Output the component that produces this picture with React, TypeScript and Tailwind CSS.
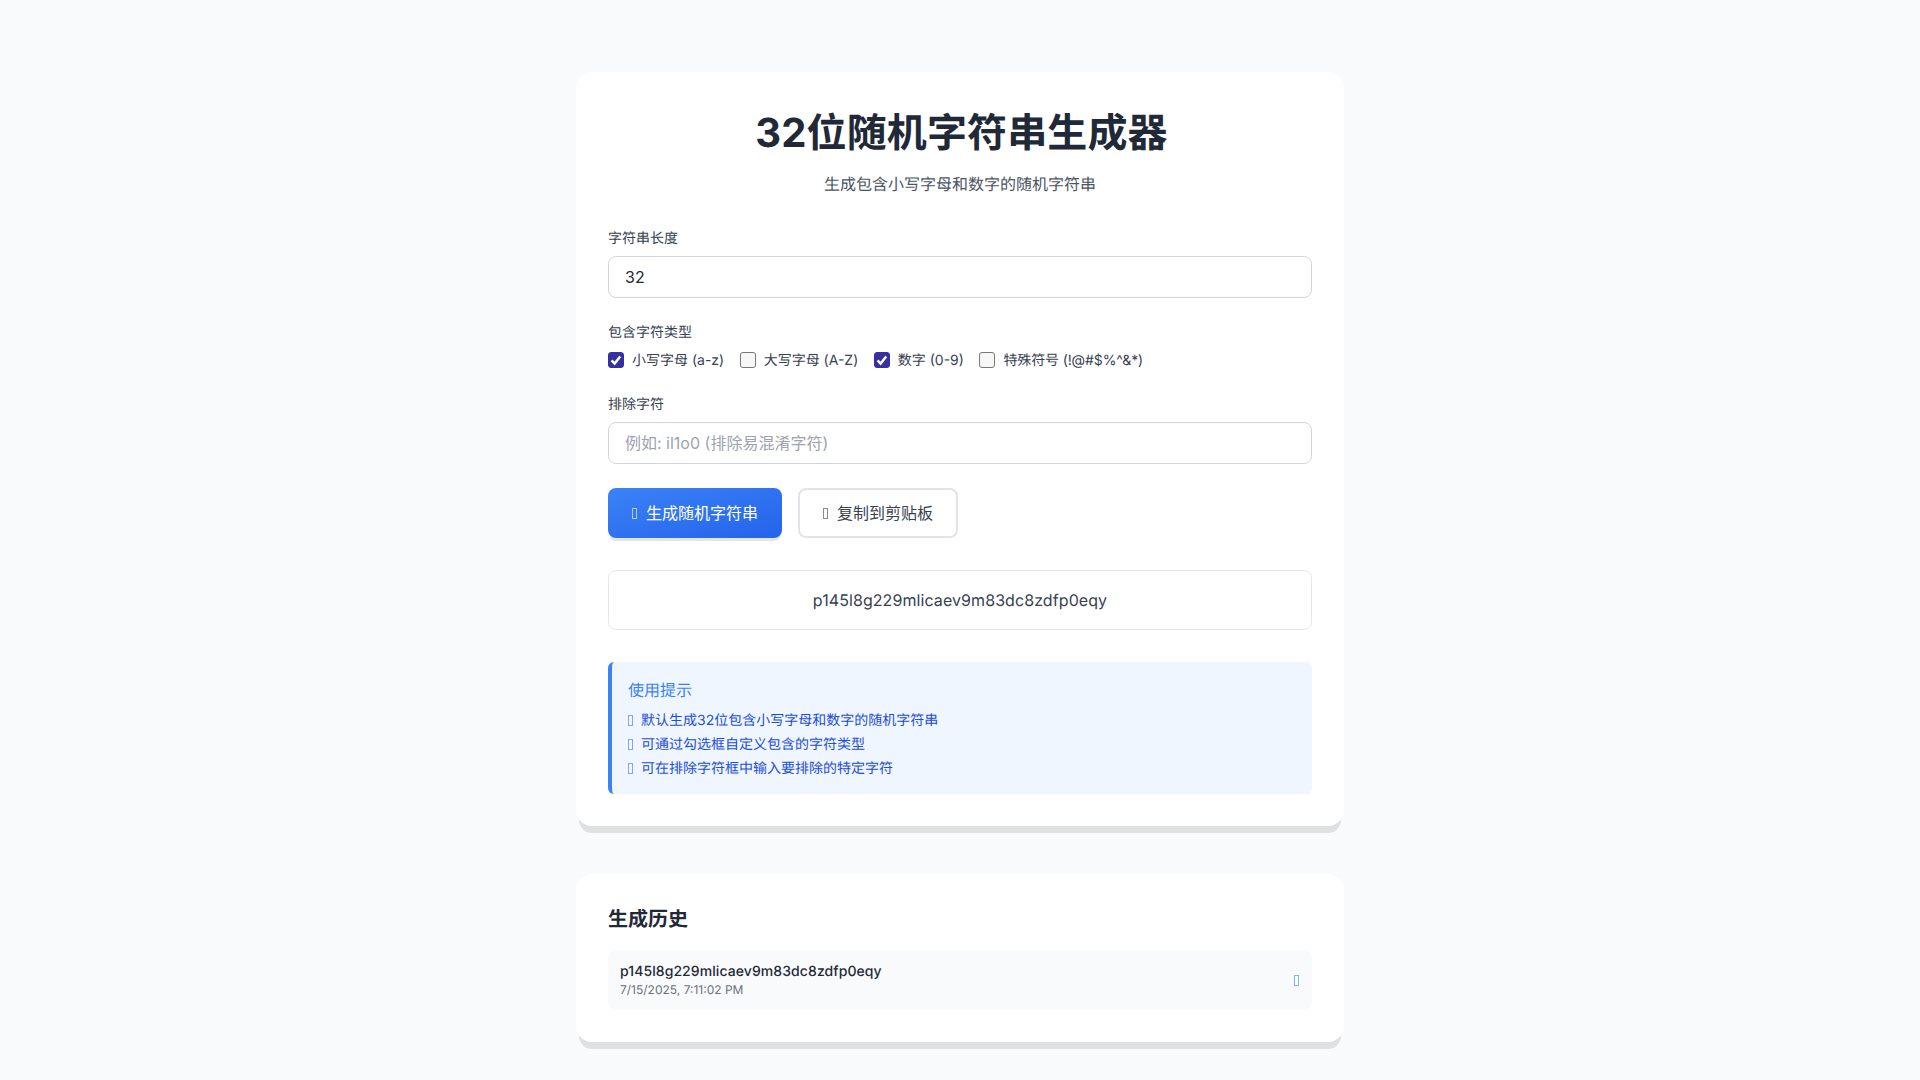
const FONT = "font-['Inter','Noto_Sans_CJK_SC',sans-serif]";

const CHAR_TYPES = [
  { label: "小写字母 (a-z)", checked: true, tracking: "" },
  { label: "大写字母 (A-Z)", checked: false, tracking: "" },
  { label: "数字 (0-9)", checked: true, tracking: "" },
  { label: "特殊符号 (!@#$%^&*)", checked: false, tracking: "tracking-[-0.12px]" },
];

const TIPS = [
  "默认生成32位包含小写字母和数字的随机字符串",
  "可通过勾选框自定义包含的字符类型",
  "可在排除字符框中输入要排除的特定字符",
];

const RESULT = "p145l8g229mlicaev9m83dc8zdfp0eqy";

// the icon font never loaded in the picture, so each icon is an empty box
function MissingGlyph({ className }: { className: string }) {
  return <span className={`inline-block h-[11px] w-[5px] shrink-0 border ${className}`} />;
}

function Check({ label, checked, tracking }: { label: string; checked: boolean; tracking: string }) {
  return (
    <label className="flex items-center gap-2 text-sm text-[#374151]">
      <span className="relative flex h-4 w-4">
        <input
          type="checkbox"
          defaultChecked={checked}
          className="peer m-0 h-4 w-4 appearance-none rounded-[3px] border border-[#767676] bg-[#f7f7f7] checked:border-[#3730a3] checked:bg-[#3730a3]"
        />
        <svg viewBox="0 0 16 16" className="pointer-events-none absolute inset-0 hidden h-4 w-4 peer-checked:block" fill="none" stroke="white" strokeWidth="2.4">
          <path d="M3.6 8.4 6.6 11.6 12.2 4.4" />
        </svg>
      </span>
      <span className={`pt-[2px] leading-[18px] ${tracking}`}>{label}</span>
    </label>
  );
}

export default function App() {
  return (
    <div className={`${FONT} min-h-screen bg-[#f9fafb] pt-[72px] pb-[38px] text-[#1f2937] [text-rendering:geometricPrecision]`}>
      <div className="mx-auto w-[768px]">
        <div className="mb-12 rounded-2xl bg-white p-8 shadow-[0_10px_0_-3px_rgba(0,0,0,0.1)]">
          <div className="mb-8 text-center">
            <h1 className="mb-[10px] pl-[3px] text-[40px] leading-[58px] font-bold tracking-[0.12px] text-[#1f2937]">32位随机字符串生成器</h1>
            <p className="text-base leading-6 text-[#4b5563]">生成包含小写字母和数字的随机字符串</p>
          </div>

          <div className="mb-6">
            <label className="mb-[6px] block text-sm leading-[22px] text-[#374151]">字符串长度</label>
            <input
              type="text"
              defaultValue="32"
              className="block h-[42px] w-full rounded-lg border border-[#d1d5db] bg-white px-4 text-base text-[#1f2937]"
            />
          </div>

          <div className="mb-6">
            <label className="mb-[6px] block text-sm leading-[22px] text-[#374151]">包含字符类型</label>
            <div className="flex gap-[15.5px]">
              {CHAR_TYPES.map((item) => (
                <Check key={item.label} label={item.label} checked={item.checked} tracking={item.tracking} />
              ))}
            </div>
          </div>

          <div className="mb-6">
            <label className="mb-[6px] block text-sm leading-[22px] text-[#374151]">排除字符</label>
            <input
              type="text"
              placeholder="例如: il1o0 (排除易混淆字符)"
              className="block h-[42px] w-full rounded-lg border border-[#d1d5db] bg-white px-4 text-base placeholder:text-[#9ca3af]"
            />
          </div>

          <div className="mb-8 flex gap-4">
            <button className="flex h-[50px] w-[174px] items-center justify-center gap-[9px] rounded-lg bg-gradient-to-br from-[#3b82f6] to-[#2563eb] text-base text-white shadow-[0_4px_0_-1px_rgba(0,0,0,0.1)]">
              <MissingGlyph className="border-white/60" />
              <span>生成随机字符串</span>
            </button>
            <button className="flex h-[50px] w-[160px] items-center justify-center gap-[9px] rounded-lg border-2 border-[#e2e4e9] bg-white text-base text-[#374151]">
              <MissingGlyph className="border-[#374151]/60" />
              <span>复制到剪贴板</span>
            </button>
          </div>

          <div className="mb-8 flex h-[60px] items-center justify-center rounded-lg border border-[#e5e7eb] bg-white text-base tracking-[0.08px] text-[#374151]">
            {RESULT}
          </div>

          <div className="h-[132px] rounded-md border-l-4 border-[#3b82f6] bg-[#eff6ff] px-4 pt-4">
            <h3 className="mb-[6px] text-base leading-6 text-[#3b82f6]">使用提示</h3>
            <ul>
              {TIPS.map((tip) => (
                <li key={tip} className="flex items-center gap-2 text-sm text-[#1d4ed8]">
                  <MissingGlyph className="border-[#1d4ed8]/50" />
                  <span className="pt-[2px] leading-[22px]">{tip}</span>
                </li>
              ))}
            </ul>
          </div>
        </div>

        <div className="rounded-2xl bg-white p-8 shadow-[0_10px_0_-3px_rgba(0,0,0,0.1)]">
          <h2 className="mb-[18px] text-xl leading-[26px] font-semibold text-[#1f2937]">生成历史</h2>
          <div className="flex h-[60px] items-center justify-between rounded-lg bg-[#f9fafb] px-3">
            <div>
              <div className="text-sm leading-5 tracking-[0.08px] font-[450] text-[#1f2937]">{RESULT}</div>
              <div className="text-xs leading-4 text-[#6b7280]">7/15/2025, 7:11:02 PM</div>
            </div>
            <MissingGlyph className="mr-px border-[#3b82f6]/60" />
          </div>
        </div>
      </div>
    </div>
  );
}
